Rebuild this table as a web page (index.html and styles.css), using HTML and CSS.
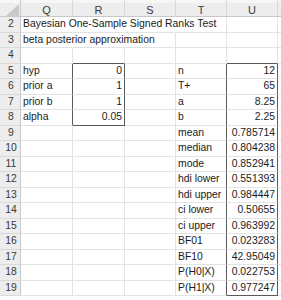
FILE: index.html
```html
<!DOCTYPE html>
<html>
<head>
<meta charset="utf-8">
<link rel="stylesheet" href="styles.css">
</head>
<body>
<div class="sheet">
  <div class="hd corner"><svg width="13" height="12" viewBox="0 0 13 12"><polygon points="0,12 13,12 13,0" fill="#c9c9c9"/></svg></div>
  <div class="hd col">Q</div>
  <div class="hd col">R</div>
  <div class="hd col">S</div>
  <div class="hd col">T</div>
  <div class="hd col">U</div>
  <div class="hd col"></div>

  <div class="rn">2</div>
  <div class="c nr">Bayesian One-Sample Signed Ranks Test</div>
  <div class="c nr"></div>
  <div class="c nr"></div>
  <div class="c"></div>
  <div class="c"></div>
  <div class="c"></div>

  <div class="rn">3</div>
  <div class="c nr">beta posterior approximation</div>
  <div class="c nr"></div>
  <div class="c"></div>
  <div class="c"></div>
  <div class="c"></div>
  <div class="c"></div>

  <div class="rn">4</div>
  <div class="c"></div>
  <div class="c bb"></div>
  <div class="c"></div>
  <div class="c"></div>
  <div class="c bb"></div>
  <div class="c"></div>

  <div class="rn">5</div>
  <div class="c br">hyp</div>
  <div class="c num br">0</div>
  <div class="c"></div>
  <div class="c br">n</div>
  <div class="c num br">12</div>
  <div class="c"></div>

  <div class="rn">6</div>
  <div class="c br">prior a</div>
  <div class="c num br">1</div>
  <div class="c"></div>
  <div class="c br">T+</div>
  <div class="c num br">65</div>
  <div class="c"></div>

  <div class="rn">7</div>
  <div class="c br">prior b</div>
  <div class="c num br">1</div>
  <div class="c"></div>
  <div class="c br">a</div>
  <div class="c num br">8.25</div>
  <div class="c"></div>

  <div class="rn">8</div>
  <div class="c br">alpha</div>
  <div class="c num br bb">0.05</div>
  <div class="c"></div>
  <div class="c br">b</div>
  <div class="c num br">2.25</div>
  <div class="c"></div>

  <div class="rn">9</div>
  <div class="c"></div>
  <div class="c"></div>
  <div class="c"></div>
  <div class="c br">mean</div>
  <div class="c num br">0.785714</div>
  <div class="c"></div>

  <div class="rn">10</div>
  <div class="c"></div>
  <div class="c"></div>
  <div class="c"></div>
  <div class="c br">median</div>
  <div class="c num br">0.804238</div>
  <div class="c"></div>

  <div class="rn">11</div>
  <div class="c"></div>
  <div class="c"></div>
  <div class="c"></div>
  <div class="c br">mode</div>
  <div class="c num br">0.852941</div>
  <div class="c"></div>

  <div class="rn">12</div>
  <div class="c"></div>
  <div class="c"></div>
  <div class="c"></div>
  <div class="c br">hdi lower</div>
  <div class="c num br">0.551393</div>
  <div class="c"></div>

  <div class="rn">13</div>
  <div class="c"></div>
  <div class="c"></div>
  <div class="c"></div>
  <div class="c br">hdi upper</div>
  <div class="c num br">0.984447</div>
  <div class="c"></div>

  <div class="rn">14</div>
  <div class="c"></div>
  <div class="c"></div>
  <div class="c"></div>
  <div class="c br">ci lower</div>
  <div class="c num br">0.50655</div>
  <div class="c"></div>

  <div class="rn">15</div>
  <div class="c"></div>
  <div class="c"></div>
  <div class="c"></div>
  <div class="c br">ci upper</div>
  <div class="c num br">0.963992</div>
  <div class="c"></div>

  <div class="rn">16</div>
  <div class="c"></div>
  <div class="c"></div>
  <div class="c"></div>
  <div class="c br">BF01</div>
  <div class="c num br">0.023283</div>
  <div class="c"></div>

  <div class="rn">17</div>
  <div class="c"></div>
  <div class="c"></div>
  <div class="c"></div>
  <div class="c br">BF10</div>
  <div class="c num br">42.95049</div>
  <div class="c"></div>

  <div class="rn">18</div>
  <div class="c"></div>
  <div class="c"></div>
  <div class="c"></div>
  <div class="c br">P(H0|X)</div>
  <div class="c num br">0.022753</div>
  <div class="c"></div>

  <div class="rn">19</div>
  <div class="c"></div>
  <div class="c"></div>
  <div class="c"></div>
  <div class="c br">P(H1|X)</div>
  <div class="c num br bb">0.977247</div>
  <div class="c"></div>
</div>
</body>
</html>
```
FILE: styles.css
```css
html, body {
  margin: 0;
  padding: 0;
  background: #ffffff;
}
.sheet {
  display: grid;
  grid-template-columns: 21px 52px 52px 51px 51px 51px 10px;
  grid-template-rows: 17px;
  grid-auto-rows: 15.5px;
  width: 281px;
  overflow: hidden;
  font-family: "Liberation Sans", Arial, sans-serif;
  font-size: 10.4px;
  color: #1b1b1b;
}
.hd {
  box-sizing: border-box;
  background: linear-gradient(#f6f6f6 0 3px, #ededed 3px);
  border-right: 1px solid #d9d9d9;
  border-bottom: 1px solid #c8c8c8;
  color: #3a3a3a;
  font-size: 11px;
  line-height: 14px;
  padding-top: 3px;
  text-align: center;
}
.corner {
  display: flex;
  justify-content: flex-end;
  align-items: flex-end;
  padding: 0 1px 0 0;
  border-right-color: #c8c8c8;
}
.corner svg {
  display: block;
}
.rn {
  box-sizing: border-box;
  background: #ededed;
  border-right: 1px solid #c8c8c8;
  border-bottom: 1px solid #dadada;
  color: #3a3a3a;
  text-align: center;
  line-height: 14px;
  padding-left: 2px;
}
.c {
  box-sizing: border-box;
  border-right: 1px solid #e3e3e3;
  border-bottom: 1px solid #e3e3e3;
  padding: 0 2px;
  line-height: 14px;
  white-space: nowrap;
  min-width: 0;
}
.num {
  text-align: right;
}
.nr {
  border-right-color: transparent;
}
.br {
  border-right-color: #595959;
}
.bb {
  border-bottom-color: #595959;
}
```
